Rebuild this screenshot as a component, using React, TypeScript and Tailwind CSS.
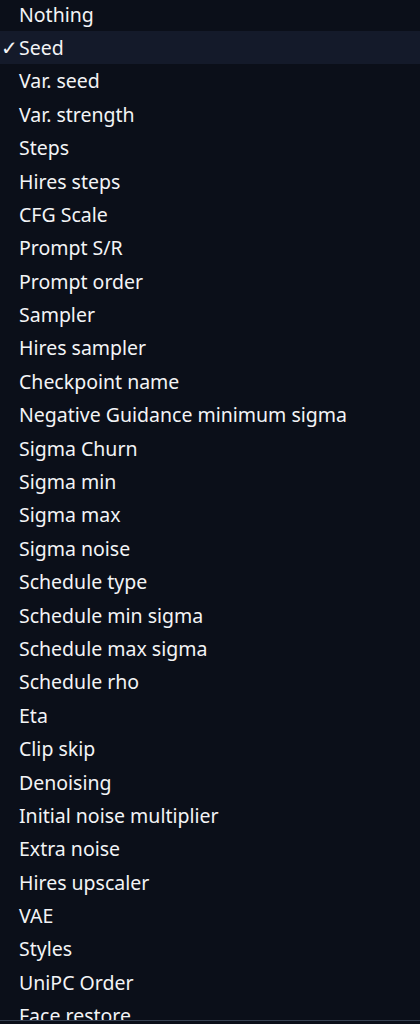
const options = [
  "Nothing",
  "Seed",
  "Var. seed",
  "Var. strength",
  "Steps",
  "Hires steps",
  "CFG Scale",
  "Prompt S/R",
  "Prompt order",
  "Sampler",
  "Hires sampler",
  "Checkpoint name",
  "Negative Guidance minimum sigma",
  "Sigma Churn",
  "Sigma min",
  "Sigma max",
  "Sigma noise",
  "Schedule type",
  "Schedule min sigma",
  "Schedule max sigma",
  "Schedule rho",
  "Eta",
  "Clip skip",
  "Denoising",
  "Initial noise multiplier",
  "Extra noise",
  "Hires upscaler",
  "VAE",
  "Styles",
  "UniPC Order",
  "Face restore",
  "Token merging ratio",
];

export default function App() {
  const selected = "Seed";
  return (
    <div className="h-[1024px] w-[420px] bg-[#0b0f19] font-['Noto_Sans','Open_Sans',sans-serif]">
      <ul className="h-[1021px] overflow-hidden border-b border-[#374151] bg-[#0b0f19]">
        <div className="-mt-[2.4px]">
          {options.map((o) => (
            <li
              key={o}
              className={
                "flex h-[33.4px] items-center text-[19.5px] leading-none text-[#f3f4f6] " +
                (o === selected ? "bg-[#141a2a]" : "")
              }
            >
              <span className="w-[19px] shrink-0 pl-[1px] text-[20px] font-light">
                {o === selected ? "✓" : ""}
              </span>
              <span>{o}</span>
            </li>
          ))}
        </div>
      </ul>
    </div>
  );
}
